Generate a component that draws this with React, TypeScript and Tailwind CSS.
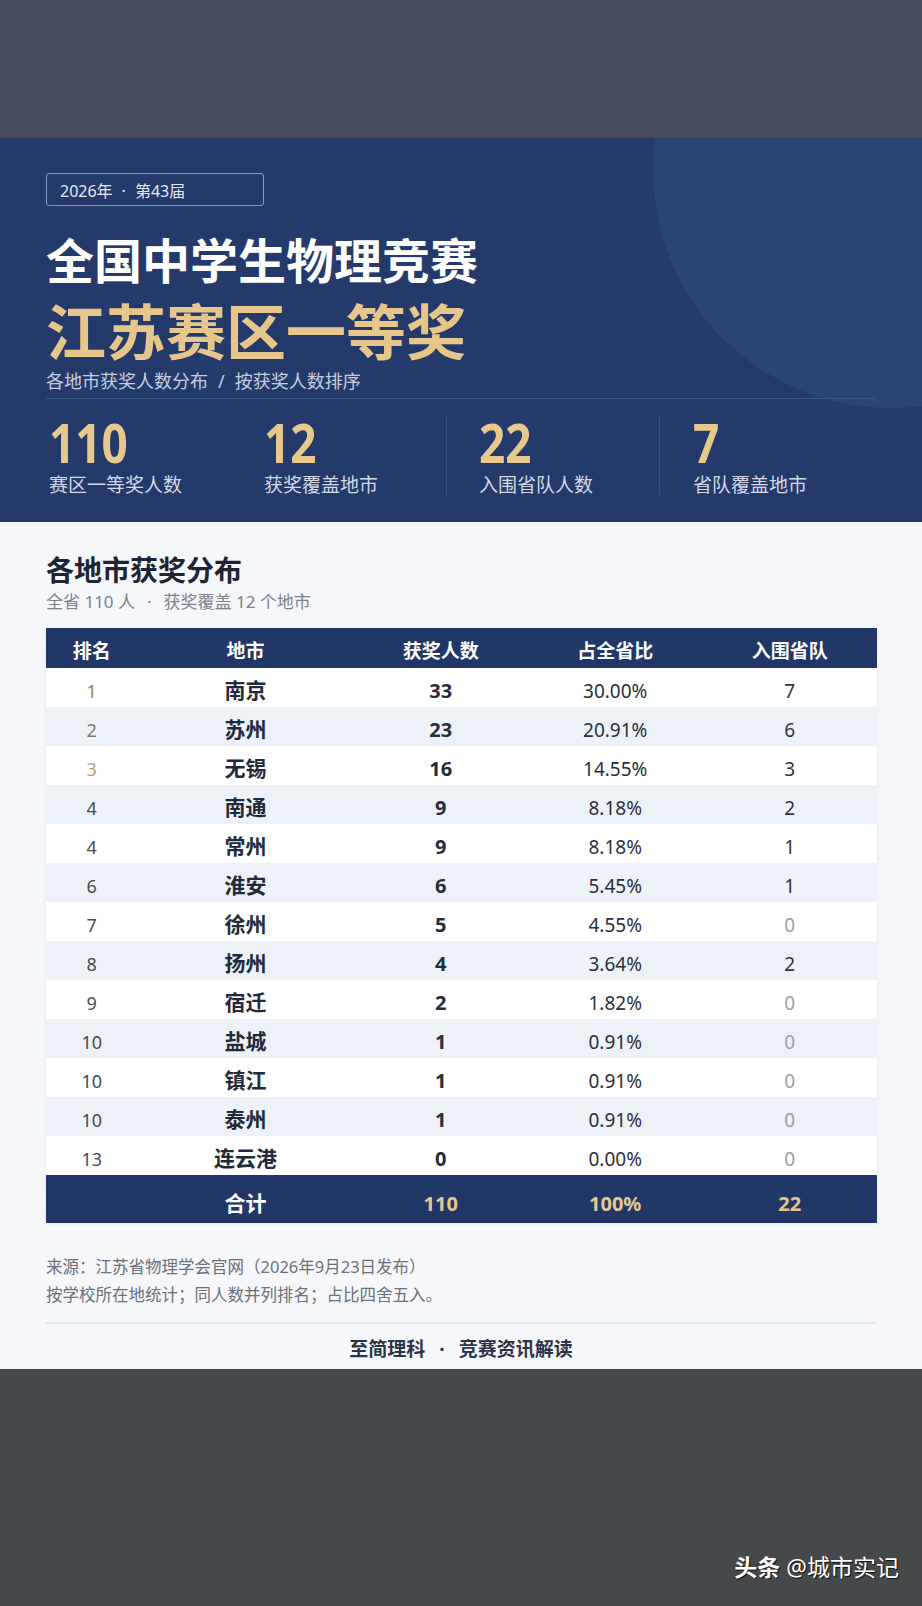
import React from 'react';

type CityRow = {
  rank: number;
  city: string;
  count: number;
  share: string;
  team: number;
};

const rows: CityRow[] = [
  { rank: 1, city: '南京', count: 33, share: '30.00%', team: 7 },
  { rank: 2, city: '苏州', count: 23, share: '20.91%', team: 6 },
  { rank: 3, city: '无锡', count: 16, share: '14.55%', team: 3 },
  { rank: 4, city: '南通', count: 9, share: '8.18%', team: 2 },
  { rank: 4, city: '常州', count: 9, share: '8.18%', team: 1 },
  { rank: 6, city: '淮安', count: 6, share: '5.45%', team: 1 },
  { rank: 7, city: '徐州', count: 5, share: '4.55%', team: 0 },
  { rank: 8, city: '扬州', count: 4, share: '3.64%', team: 2 },
  { rank: 9, city: '宿迁', count: 2, share: '1.82%', team: 0 },
  { rank: 10, city: '盐城', count: 1, share: '0.91%', team: 0 },
  { rank: 10, city: '镇江', count: 1, share: '0.91%', team: 0 },
  { rank: 10, city: '泰州', count: 1, share: '0.91%', team: 0 },
  { rank: 13, city: '连云港', count: 0, share: '0.00%', team: 0 },
];

const stats = [
  { value: '110', label: '赛区一等奖人数' },
  { value: '12', label: '获奖覆盖地市' },
  { value: '22', label: '入围省队人数' },
  { value: '7', label: '省队覆盖地市' },
];

// top three ranks get their own tint
const rankColor = (i: number) => {
  if (i === 0) return 'text-[#a08049]';
  if (i === 1) return 'text-[#7b7b7b]';
  if (i === 2) return 'text-[#b39c7c]';
  return 'text-[#474b52]';
};

const StatBlock = ({ value, label, className }: { value: string; label: string; className: string }) => (
  <div className={className}>
    <div className="h-[54px] text-[54px] leading-none font-bold text-[#e7c98d]">
      <span className="inline-block origin-left scale-x-[0.85]">{value}</span>
    </div>
    <div className="mt-[7px] text-[19px] leading-[19px] text-[#d3d9e6]">{label}</div>
  </div>
);

export default function App() {
  return (
    <div className="w-[922px] min-h-[1606px] flex flex-col font-['Noto_Sans','Noto_Sans_CJK_SC',sans-serif]">
      {/* blurred top strip */}
      <div className="h-[138px] bg-[#474c5d]" />

      {/* Header */}
      <div className="relative overflow-hidden bg-[#243a6b] px-[46px] pt-[35px] pb-[27px]">
        <div className="absolute top-[-206px] right-[-207px] w-[476px] h-[476px] rounded-full bg-[#2a4474]" />
        <div className="relative">
          <div className="flex items-center h-[33px] w-[218px] rounded-[3px] border border-[#8b9cc2] pl-[13px] pt-[2px] text-[16px] text-[#e3e8f1]">
            2026年<span className="mx-[9px]">·</span>第43届
          </div>
          <h1 className="mt-[31px] text-[48px] leading-[48px] font-bold text-white">全国中学生物理竞赛</h1>
          <h2 className="mt-[17px] text-[60px] leading-[60px] font-bold text-[#e6c68a]">江苏赛区一等奖</h2>
          <p className="mt-[10px] text-[18px] leading-[18px] text-[#c6cee0]">
            各地市获奖人数分布<span className="mx-[10px]">/</span>按获奖人数排序
          </p>
          <div className="mt-[8px] border-t border-[#3d5486]" />
          <div className="flex mt-[16px]">
            <StatBlock {...stats[0]} className="w-[218px] pl-[3px]" />
            <StatBlock {...stats[1]} className="w-[182px]" />
            <StatBlock {...stats[2]} className="w-[213px] pl-[32px] border-l border-[#3a5082]" />
            <StatBlock {...stats[3]} className="flex-1 pl-[33px] border-l border-[#3a5082]" />
          </div>
        </div>
      </div>

      {/* Distribution table */}
      <div className="bg-[#f5f7fa] px-[46px] pt-[34px] pb-[10px]">
        <h3 className="text-[28px] leading-[28px] font-bold text-[#1d2433]">各地市获奖分布</h3>
        <p className="mt-[9px] text-[17px] leading-[17px] text-[#7c818a]">
          全省 110 人<span className="mx-[12px]">·</span>获奖覆盖 12 个地市
        </p>

        <div className="mt-[18px] w-[831px] shadow-[0_1px_4px_rgba(30,50,90,0.08)]">
          <div className="grid grid-cols-[11%_26%_21%_21%_21%] h-[40px] items-center pt-[6px] bg-[#213768] text-[19px] font-bold text-white text-center">
            <div>排名</div>
            <div>地市</div>
            <div>获奖人数</div>
            <div>占全省比</div>
            <div>入围省队</div>
          </div>
          {rows.map((r, i) => (
            <div
              key={r.city}
              className={`grid grid-cols-[11%_26%_21%_21%_21%] h-[39px] items-center pt-[7px] text-center ${i % 2 === 0 ? 'bg-white' : 'bg-[#edf2f9]'}`}
            >
              <div className={`text-[18px] ${rankColor(i)}`}>{r.rank}</div>
              <div className="text-[21px] font-bold text-[#222a3a]">{r.city}</div>
              <div className="text-[20px] font-bold text-[#262c38]">{r.count}</div>
              <div className="text-[19px] text-[#2a2f3a]">{r.share}</div>
              <div className={`text-[19px] ${r.team === 0 ? 'text-[#9ba0a8]' : 'text-[#2f343d]'}`}>{r.team}</div>
            </div>
          ))}
          <div className="grid grid-cols-[11%_26%_21%_21%_21%] h-[48px] items-center pt-[9px] bg-[#213768] text-center font-bold">
            <div />
            <div className="text-[21px] text-white">合计</div>
            <div className="text-[20px] text-[#e4c98f]">110</div>
            <div className="text-[20px] text-[#e4c98f]">100%</div>
            <div className="text-[20px] text-[#e4c98f]">22</div>
          </div>
        </div>

        <div className="mt-[30px] text-[16.5px] leading-[28px] text-[#6b7079]">
          <p>来源：江苏省物理学会官网（2026年9月23日发布）</p>
          <p>按学校所在地统计；同人数并列排名；占比四舍五入。</p>
        </div>
        <div className="mt-[13px] border-t-2 border-[#e1e5ec]" />
        <p className="mt-[16px] text-center text-[19px] leading-[19px] font-bold text-[#2b3348]">
          至简理科<span className="mx-[14px]">·</span>竞赛资讯解读
        </p>
      </div>

      {/* blurred bottom strip with watermark */}
      <div className="flex-1 h-[238px] bg-[#45494c] flex items-end justify-end pr-[23px] pb-[27px]">
        <div className="text-[23px] leading-none text-white [text-shadow:1px_1px_1px_rgba(0,0,0,0.8)]">
          <span className="font-bold">头条</span> @城市实记
        </div>
      </div>
    </div>
  );
}
